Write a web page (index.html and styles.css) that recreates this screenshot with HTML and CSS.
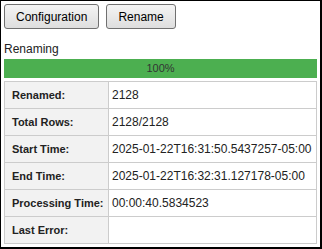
FILE: index.html
```html
<!DOCTYPE html>
<html lang="en">
<head>
    <meta charset="UTF-8">
    <meta name="viewport" content="width=device-width, initial-scale=1.0">
    <title>Rename</title>
    <link rel="stylesheet" href="styles.css">
</head>
<body>
    <div class="panel">
        <div class="toolbar">
            <button class="btn">Configuration</button>
            <button class="btn">Rename</button>
        </div>
        <div class="status">Renaming</div>
        <div class="progress"><div class="bar" style="width: 100%;">100%</div></div>
        <table class="info">
            <colgroup><col class="keycol"><col></colgroup>
            <tr><th>Renamed:</th><td>2128</td></tr>
            <tr><th>Total Rows:</th><td>2128/2128</td></tr>
            <tr><th>Start Time:</th><td>2025-01-22T16:31:50.5437257-05:00</td></tr>
            <tr><th>End Time:</th><td>2025-01-22T16:32:31.127178-05:00</td></tr>
            <tr><th>Processing Time:</th><td>00:00:40.5834523</td></tr>
            <tr><th>Last Error:</th><td></td></tr>
        </table>
    </div>
</body>
</html>
```

FILE: styles.css
```css
body {
    margin: 0;
    background-color: #fff;
    font-family: "Liberation Sans", Arial, sans-serif;
    font-size: 12px;
    color: #000;
}
.panel {
    width: 322px;
    height: 249px;
    box-sizing: border-box;
    border: solid #000;
    border-width: 1px 2px 2px 1px;
    padding: 3px;
    display: flex;
    flex-direction: column;
}
.toolbar {
    display: flex;
    gap: 7px;
}
.btn {
    height: 25px;
    padding: 0 11px;
    border: 1px solid #707070;
    border-radius: 3px;
    background: linear-gradient(#f4f4f4, #dedede);
    font-family: inherit;
    font-size: 12px;
    color: #000;
}
.status {
    margin-top: 13px;
    line-height: 14px;
    color: #222;
}
.progress {
    margin-top: 3px;
    height: 19px;
    background-color: #eee;
}
.bar {
    height: 100%;
    background-color: #4caf50;
    color: #333;
    font-size: 11px;
    line-height: 19px;
    text-align: center;
}
.info {
    margin-top: 3px;
    width: 100%;
    border-collapse: collapse;
    table-layout: fixed;
}
.keycol {
    width: 104px;
}
.info th,
.info td {
    border: 1px solid #ccc;
    height: 14px;
    padding: 6px 3px;
    line-height: 14px;
    text-align: left;
    color: #222;
    white-space: nowrap;
}
.info th {
    padding-left: 7px;
    background-color: #f2f2f2;
    font-size: 11px;
}
```
